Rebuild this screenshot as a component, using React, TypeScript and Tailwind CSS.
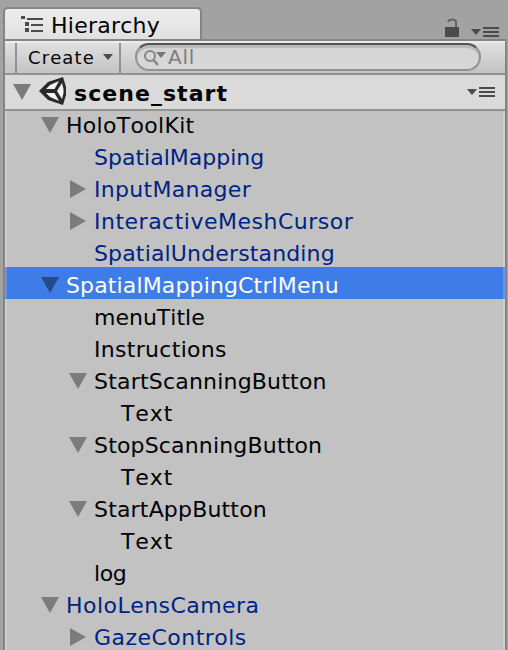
import React from "react";

type Node = { label: string; pad: string; arrow?: "down" | "right"; tone: "black" | "blue" | "selected"; track: string };

const nodes: Node[] = [
  { label: "HoloToolKit", pad: "pl-[36px]", arrow: "down", tone: "black", track: "tracking-[0.3px]" },
  { label: "SpatialMapping", pad: "pl-[64px]", tone: "blue", track: "tracking-[0px]" },
  { label: "InputManager", pad: "pl-[64px]", arrow: "right", tone: "blue", track: "tracking-[0.3px]" },
  { label: "InteractiveMeshCursor", pad: "pl-[64px]", arrow: "right", tone: "blue", track: "tracking-[0.5px]" },
  { label: "SpatialUnderstanding", pad: "pl-[64px]", tone: "blue", track: "tracking-[0.15px]" },
  { label: "SpatialMappingCtrlMenu", pad: "pl-[36px]", arrow: "down", tone: "selected", track: "tracking-[0.14px]" },
  { label: "menuTitle", pad: "pl-[64px]", tone: "black", track: "tracking-[0px]" },
  { label: "Instructions", pad: "pl-[64px]", tone: "black", track: "tracking-[0.3px]" },
  { label: "StartScanningButton", pad: "pl-[64px]", arrow: "down", tone: "black", track: "tracking-[0.2px]" },
  { label: "Text", pad: "pl-[91px]", tone: "black", track: "tracking-[0.9px]" },
  { label: "StopScanningButton", pad: "pl-[64px]", arrow: "down", tone: "black", track: "tracking-[0.17px]" },
  { label: "Text", pad: "pl-[91px]", tone: "black", track: "tracking-[0.9px]" },
  { label: "StartAppButton", pad: "pl-[64px]", arrow: "down", tone: "black", track: "tracking-[0.18px]" },
  { label: "Text", pad: "pl-[91px]", tone: "black", track: "tracking-[0.9px]" },
  { label: "log", pad: "pl-[64px]", tone: "black", track: "tracking-[-0.4px]" },
  { label: "HoloLensCamera", pad: "pl-[36px]", arrow: "down", tone: "blue", track: "tracking-[0.46px]" },
  { label: "GazeControls", pad: "pl-[64px]", arrow: "right", tone: "blue", track: "tracking-[0.47px]" },
];

const tones = {
  black: "text-black",
  blue: "text-[#002384]",
  selected: "text-white bg-[#3e7de7] border-x-2 border-[#6397eb]",
};

function Arrow({ dir, color = "#7b7b7b" }: { dir?: "down" | "right"; color?: string }) {
  return (
    <svg className="h-[18px] w-[18px] shrink-0" viewBox="0 0 18 18">
      {dir === "down" && <path d="M0 1H18L9 17Z" fill={color} />}
      {dir === "right" && <path d="M1 0L17 9L1 18Z" fill={color} />}
    </svg>
  );
}

function MenuIcon() {
  return (
    <svg className="h-[10px] w-[28px] shrink-0" viewBox="0 0 28 10" fill="#4b4b4b">
      <path d="M0 2H10L5 8Z" />
      <path d="M12 0H28V2H12ZM12 4H28V6H12ZM12 8H28V10H12Z" />
    </svg>
  );
}

export default function App() {
  return (
    <div className="flex h-[650px] w-[508px] flex-col overflow-hidden bg-[#a2a2a2] font-['DejaVu_Sans',Verdana,sans-serif] [font-kerning:none]">
      <div className="flex h-[39px] shrink-0 items-end pl-[3px]">
        <div className="flex h-[32px] w-[199px] items-center rounded-t-[5px] border-2 border-b-0 border-[#858585] bg-linear-to-b from-[#ededed] to-[#e0e0e0] pl-[16px]">
          <svg className="h-[16px] w-[22px] shrink-0" viewBox="0 0 22 16" fill="#4b4b4b">
            <path d="M0 0H4V3H0ZM6 2H22V4H6ZM4 6H8V10H4ZM10 8H22V10H10ZM4 12H8V16H4ZM10 14H22V16H10Z" />
          </svg>
          <span className="ml-[8px] pt-[3px] text-[22px] leading-[28px] tracking-[0.25px]">Hierarchy</span>
        </div>
        <svg className="mb-[2px] ml-[243px] h-[19px] w-[15px] shrink-0" viewBox="0 0 15 19">
          <path d="M0 9H14V19H0Z" fill="#4b4b4b" />
          <path d="M3 4Q4 1.500 7 1.500Q11 1.500 11 4V9" fill="none" stroke="#626262" strokeWidth="2" />
        </svg>
        <div className="mb-[2px] ml-[11px] flex"><MenuIcon /></div>
      </div>
      <div className="ml-[3px] flex min-h-0 w-[504px] flex-1 flex-col border-x-2 border-t-2 border-[#858585] bg-[#c2c2c2]">
        <div className="flex h-[34px] shrink-0 border-t-2 border-b-2 border-t-[#ececec] border-b-[#929292] bg-linear-to-b from-[#e0e0e0] to-[#c3c3c3]">
          <div className="w-[12px] border-r-2 border-[#929292]" />
          <div className="flex w-[104px] items-center border-r-2 border-[#929292] pl-[11px]">
            <span className="w-[71px] text-[18px] leading-[26px] tracking-[1.1px]">Create</span>
            <svg className="mb-[3px] ml-[4px] h-[6px] w-[10px]" viewBox="0 0 10 6"><path d="M0 0H10L5 6Z" fill="#4b4b4b" /></svg>
          </div>
          <div className="ml-[14px] flex h-[28px] w-[346px] items-center rounded-full border-2 border-[#929292] border-t-[#505350] bg-[#d6d6d6] pl-[6px] shadow-[inset_0_3px_1px_#b9b9b9]">
            <svg className="h-[18px] w-[24px] shrink-0" viewBox="0 0 24 18" fill="none" stroke="#858585" strokeWidth="2">
              <circle cx="7" cy="8" r="5" />
              <path d="M10.500 12L15 17" strokeWidth="2.500" />
              <path d="M13 4H23L18 10Z" fill="#777" stroke="none" />
            </svg>
            <span className="-mt-[1px] ml-[1px] text-[20px] leading-[24px] tracking-[0.8px] text-[#7d7d7d]">All</span>
          </div>
        </div>
        <div className="flex h-[36px] shrink-0 items-center border-b-2 border-[#929292] bg-[#dadada] pl-[8px]">
          <Arrow dir="down" />
          <svg className="mb-[3px] ml-[8px] h-[28px] w-[28px] shrink-0" viewBox="0 0 28 28">
            <path d="M0 14L9 5L24 0L27 10V18L24 28L9 23Z" fill="#292929" />
            <path d="M7 12L11 8L20 4L15.500 12ZM7 16L11 20L20 24L15.500 16ZM18 14L23 6L24.500 12V16L23 22Z" fill="#f4f4f4" />
          </svg>
          <span className="ml-[7px] pt-[4px] text-[22px] leading-[28px] font-bold tracking-[1.05px]">scene_start</span>
          <div className="mr-[10px] ml-auto flex"><MenuIcon /></div>
        </div>
        <div className="min-h-0 flex-1 overflow-hidden">
          <div className="-mt-[4px]">
            {nodes.map((n, i) => (
              <div key={i} className={`flex h-[32px] items-center ${tones[n.tone]} ${n.tone === "selected" ? "" : "border-x-2 border-[#cecece]"}`}>
                <div className={`flex items-center ${n.pad}`}>
                  <div className="mt-[3px] -ml-[2px] flex"><Arrow dir={n.arrow} color={n.tone === "selected" ? "#264b8a" : undefined} /></div>
                  <span className={`ml-[7px] pt-[6px] text-[22px] leading-[28px] whitespace-nowrap ${n.track}`}>{n.label}</span>
                </div>
              </div>
            ))}
          </div>
        </div>
      </div>
    </div>
  );
}
